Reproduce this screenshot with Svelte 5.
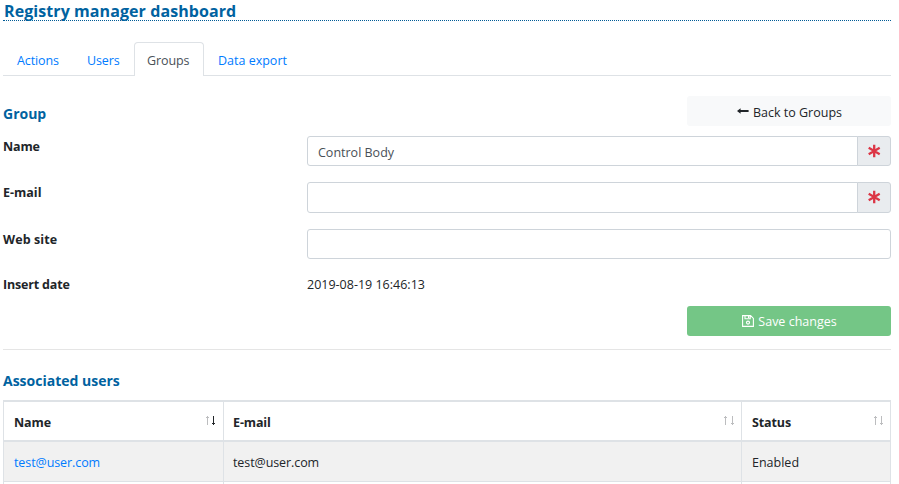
<script>
  const tabs = [
    { label: 'Actions', width: 70 },
    { label: 'Users', width: 61 },
    { label: 'Groups', width: 70, active: true },
    { label: 'Data export', width: 97 }
  ];
  const columns = [
    { label: 'Name', sorted: true, gap: 6 },
    { label: 'E-mail', gap: 7 },
    { label: 'Status', gap: 6 }
  ];
  let name = $state('Control Body');
  let email = $state('');
  let site = $state('');
</script>

{#snippet star()}
  <span class="required">
    <svg width="14" height="14" viewBox="0 0 14 14"><path d="M7.2 .7v12.6M1.7 3.8l11 6.4M12.7 3.8l-11 6.4" stroke="#dc3545" stroke-width="2.3" fill="none" /></svg>
  </span>
{/snippet}

<main>
  <h1>Registry manager dashboard</h1>
  <nav>
    {#each tabs as tab}
      <a href="#top" class:active={tab.active} style:width="{tab.width}px">{tab.label}</a>
    {/each}
  </nav>

  <div class="head">
    <h2>Group</h2>
    <button class="light">
      <svg width="12" height="8" viewBox="0 0 12 8"><path d="M0 4 3.6 1.2V3.1h8v1.8h-8v1.9z" fill="#212529" /></svg>
      <span class="back">Back to Groups</span>
    </button>
  </div>

  <div class="row name">
    <label for="name">Name</label>
    <div class="field"><input id="name" bind:value={name} />{@render star()}</div>
  </div>
  <div class="row mail">
    <label for="mail">E-mail</label>
    <div class="field"><input id="mail" bind:value={email} />{@render star()}</div>
  </div>
  <div class="row site">
    <label for="site">Web site</label>
    <div class="field"><input id="site" class="alone" bind:value={site} /></div>
  </div>
  <div class="row date">
    <b>Insert date</b>
    <span class="stamp">2019-08-19 16:46:13</span>
  </div>
  <div class="actions">
    <button class="save">
      <svg width="12" height="12" viewBox="0 0 12 12"><path d="M.6 .6h8l2.8 2.8v8H.6zM3 .6v3.2h5.2V.6" fill="none" stroke="#fff" stroke-width="1.1" /><path d="M6 .8h1.3v2.3H6z" fill="#fff" /><circle cx="6" cy="7.6" r="1.5" fill="none" stroke="#fff" stroke-width="1.2" /></svg>
      <span class="savetext">Save changes</span>
    </button>
  </div>
  <hr />
  <h2 class="assoc">Associated users</h2>

  <div class="table">
    <div class="tr thead">
      {#each columns as col}
        <div class="cell">
          <b>{col.label}</b>
          <svg width="12" height="10" viewBox="0 0 12 10" shape-rendering="crispEdges">
            <path d="M2 0h1v9H2zM1 1h3v1H1z" fill="#bcbdbf" />
            <path d="M{2 + col.gap} 0h1v9h-1zM{1 + col.gap} 7h3v1h-3z" fill={col.sorted ? '#212529' : '#bcbdbf'} />
          </svg>
        </div>
      {/each}
    </div>
    <div class="tr body">
      <div class="cell"><a href="#user">test@user.com</a></div>
      <div class="cell"><span>test@user.com</span></div>
      <div class="cell"><span>Enabled</span></div>
    </div>
    <div class="tr next"><div class="cell"></div><div class="cell"></div><div class="cell"></div></div>
  </div>
</main>

<style>
  :global(body) { margin: 0; background: #fff; overflow: hidden; }
  main { box-sizing: border-box; width: 899px; height: 484px; overflow: hidden; padding: 0 8px 0 3px; font: 12.5px/19px "Open Sans", "Noto Sans", sans-serif; color: #212529; }
  main * { box-sizing: border-box; }
  h1 { margin: 0 0 21px; height: 21px; padding-left: 1px; border-bottom: 1px dotted #005b96; color: #0062a0; font-size: 16px; line-height: 23px; font-weight: 700; letter-spacing: .08px; white-space: nowrap; }
  nav { display: flex; height: 34px; border-bottom: 1px solid #dee2e6; }
  a { color: #007bff; text-decoration: none; }
  nav a { height: 34px; padding: 9px 0 0 13px; border: 1px solid transparent; border-bottom: 0; line-height: 18px; white-space: nowrap; }
  nav a:not(:last-child) { letter-spacing: -.1px; }
  nav .active { padding-left: 12px; color: #495057; background: #fff; border-color: #dee2e6; border-radius: 4px 4px 0 0; }
  .head { display: flex; justify-content: space-between; height: 60px; padding-top: 20px; }
  h2 { margin: 0; color: #0062a0; font-size: 14px; font-weight: 700; line-height: 36px; }
  button { display: flex; align-items: center; justify-content: center; width: 204px; height: 30px; padding: 0 0 0 1px; border: 0; border-radius: 3px; font: inherit; }
  .light { background: #f8f9fa; color: #212529; gap: 4px; }
  .light span { padding-top: 3px; }
  .row { display: flex; font-size: 12.5px; }
  .name, .mail { height: 46px; }
  .site { height: 46px; padding-top: 1px; }
  .row label, .row > b { width: 304px; line-height: 21px; font-weight: 700; }
  .row > b { letter-spacing: -.17px; }
  .name label { letter-spacing: -.15px; }
  .site label { letter-spacing: .1px; }
  .field { display: flex; width: 584px; height: 30px; }
  .mail .field { height: 31px; }
  input { flex: 1; min-width: 0; padding: 2px 10px 0; border: 1px solid #ced4da; border-radius: 3px 0 0 3px; color: #495057; font: inherit; outline: 0; background: #fff; }
  .alone { border-radius: 3px; }
  .required { display: flex; align-items: center; justify-content: center; width: 34px; margin-left: -1px; background: #e9ecef; border: 1px solid #ced4da; border-radius: 0 3px 3px 0; }
  .mail .required { padding-bottom: 1px; }
  .date { height: 32px; line-height: 21px; }
  .actions { display: flex; justify-content: flex-end; height: 43px; }
  .save { background: #74c686; color: #fff; gap: 4px; }
  hr { height: 1px; margin: 0; border: 0; background: #e5e5e5; }
  .assoc { height: 50px; padding-top: 13px; }
  .table { border: 1px solid #dee2e6; border-top: 2px solid #dee2e6; border-bottom: 0; }
  .tr { display: grid; grid-template-columns: 220px 518px 1fr; }
  .thead { height: 40px; border-bottom: 2px solid #dee2e6; }
  .body { height: 40px; background: #f1f1f1; border-bottom: 1px solid #dee2e6; }
  .next { height: 5px; }
  .cell { display: flex; align-items: center; justify-content: space-between; padding: 2px 6px 0 10px; border-right: 1px solid #dee2e6; }
  .cell:nth-child(2) { padding-left: 9px; }
  .cell:last-child { padding-right: 5px; border: 0; }
  .thead b { letter-spacing: -.12px; }
  .body .cell:not(:last-child) { letter-spacing: -.09px; }
  .cell svg { margin-bottom: 2px; }
</style>
